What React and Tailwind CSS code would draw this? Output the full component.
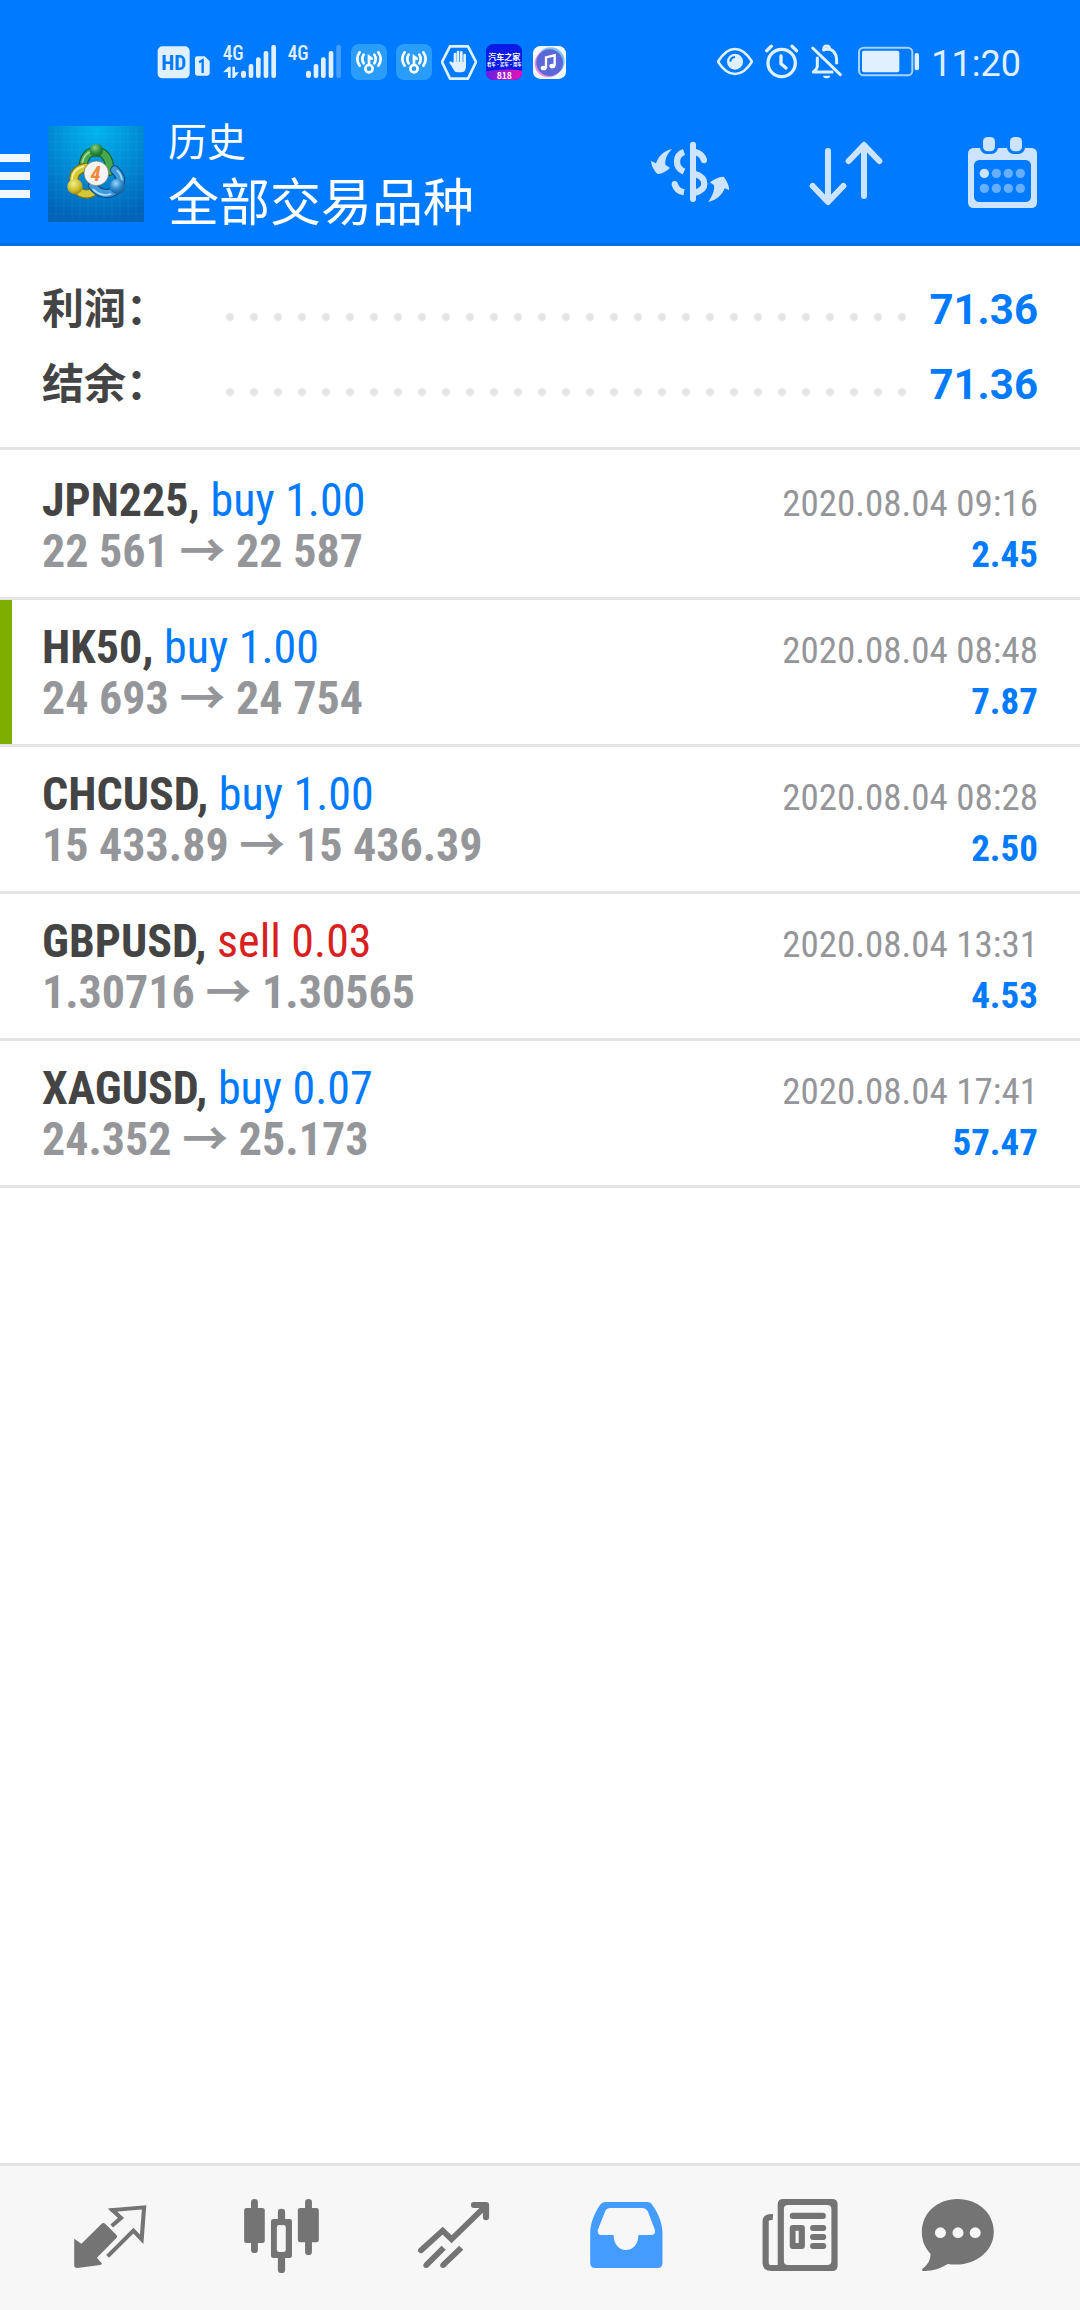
import { useState } from "react";

const totals = [
  { label: "利润：", value: "71.36" },
  { label: "结余：", value: "71.36" },
];

const deals = [
  { symbol: "JPN225", side: "buy", volume: "1.00", open: "22 561", close: "22 587", time: "2020.08.04 09:16", profit: "2.45" },
  { symbol: "HK50", side: "buy", volume: "1.00", open: "24 693", close: "24 754", time: "2020.08.04 08:48", profit: "7.87", takeProfit: true },
  { symbol: "CHCUSD", side: "buy", volume: "1.00", open: "15 433.89", close: "15 436.39", time: "2020.08.04 08:28", profit: "2.50" },
  { symbol: "GBPUSD", side: "sell", volume: "0.03", open: "1.30716", close: "1.30565", time: "2020.08.04 13:31", profit: "4.53" },
  { symbol: "XAGUSD", side: "buy", volume: "0.07", open: "24.352", close: "25.173", time: "2020.08.04 17:41", profit: "57.47" },
];

// ---- status bar icons ----

function HdIcon() {
  return (
    <svg viewBox="51 42 171 108" className="h-9 w-[57px]" fill="currentColor" aria-hidden="true">
      <rect x="53" y="49" width="96" height="96" rx="14" />
      <text x="101" y="120" textAnchor="middle" fontSize="63" fontWeight="700" className="fill-[#007aff] font-['Roboto_Condensed','Liberation_Sans_Narrow',sans-serif]">HD</text>
      <path d="M172 79h22l15 15v36q0 7-7 7h-30q-7 0-7-7V86q0-7 7-7z" />
      <path d="M177 97l11-6v38" fill="none" stroke="#007aff" strokeWidth="7" />
    </svg>
  );
}

function SignalIcon({ weak }) {
  return (
    <svg viewBox={weak ? "444 42 162 108" : "249 42 168 108"} className={weak ? "h-9 w-[54px] overflow-visible" : "h-9 w-[56px] overflow-visible"} fill="currentColor" aria-hidden="true">
      <text x={weak ? 443 : 248} y="89" fontSize="58" fontWeight="500" className="font-['Roboto_Condensed','Liberation_Sans_Narrow',sans-serif]">4G</text>
      {!weak && <path d="M249 127l17-17h6v34h-8v-18zM277 110h8v17h12l-14 17h-6z" />}
      <g transform={weak ? "translate(195 0)" : undefined}>
        <rect x="303" y="122" width="15" height="22" rx="7" />
        <rect x="326" y="102" width="14" height="42" rx="6" />
        <rect x="348" y="82" width="14" height="62" rx="6" />
        <rect x="371" y="63" width="14" height="81" rx="6" />
        <rect x="394" y="45" width="14" height="99" rx="6" opacity={weak ? 0.3 : 1} />
      </g>
    </svg>
  );
}

function WifiKeyIcon() {
  return (
    <svg viewBox="78 42 108 108" className="h-9 w-9" aria-hidden="true">
      <rect x="78" y="42" width="108" height="108" rx="24" fill="#2a9dfb" />
      <g fill="none" stroke="#fff" strokeWidth="8" strokeLinecap="round">
        <circle cx="132" cy="116" r="11" />
        <path d="M132 104V80l8 6" />
        <path d="M116 74q-8 13 0 26M104 67q-14 20 0 40M148 74q8 13 0 26M160 67q14 20 0 40" />
      </g>
    </svg>
  );
}

function HandIcon() {
  return (
    <svg viewBox="213 42 108 108" className="h-9 w-9" aria-hidden="true">
      <path d="M240 49h54l24 47-24 50h-54l-24-50z" fill="none" stroke="currentColor" strokeWidth="8" strokeLinejoin="round" />
      <g fill="none" stroke="currentColor" strokeLinecap="round" strokeWidth="8">
        <path d="M255 72v32M264 66v38M274 67v37M284 75v30M242 98l10 12" />
      </g>
      <path d="M251 96h37v14q-1 17-14 17h-12q-8 0-12-9l-8-16z" fill="currentColor" />
    </svg>
  );
}

function AutohomeIcon() {
  return (
    <svg viewBox="348 42 108 108" className="h-9 w-9" aria-hidden="true">
      <defs>
        <linearGradient id="sale">
          <stop offset="0" stopColor="#6a1fe0" />
          <stop offset="1" stopColor="#e512b4" />
        </linearGradient>
        <clipPath id="autoClip">
          <rect x="348" y="42" width="108" height="108" rx="22" />
        </clipPath>
      </defs>
      <g clipPath="url(#autoClip)">
        <rect x="348" y="42" width="108" height="108" fill="#0a1be8" />
        <path d="M348 124q54-10 108-2v28H348z" fill="url(#sale)" />
        <g fill="#fff" textAnchor="middle" fontWeight="700" className="font-['Noto_Sans_CJK_SC',sans-serif]">
          <text x="403" y="91" fontSize="24">汽车之家</text>
          <text x="403" y="109" fontSize="13">看车·买车·用车</text>
          <text x="403" y="146" fontSize="26">818</text>
        </g>
      </g>
    </svg>
  );
}

function MusicIcon() {
  return (
    <svg viewBox="483 42 108 108" className="h-9 w-9" aria-hidden="true">
      <rect x="489" y="48" width="99" height="99" rx="22" fill="#f5f7ff" />
      <circle cx="542" cy="94" r="42" fill="#7cc3f5" />
      <circle cx="535" cy="101" r="41" fill="#e98be0" />
      <circle cx="539" cy="98" r="40" fill="#5a68d8" />
      <path d="M528 113V82l26-6v31" fill="none" stroke="#fff" strokeWidth="7" />
      <ellipse cx="521" cy="114" rx="9" ry="7" fill="#fff" />
      <ellipse cx="547" cy="108" rx="9" ry="7" fill="#fff" />
    </svg>
  );
}

function EyeIcon() {
  return (
    <svg viewBox="54 42 108 108" className="h-9 w-9" aria-hidden="true">
      <path d="M57 95Q80 57 108 57T159 95Q136 132 108 132T57 95z" fill="none" stroke="currentColor" strokeWidth="8" />
      <circle cx="108" cy="95" r="24" fill="currentColor" />
      <path d="M94 95q1-13 14-14" fill="none" stroke="#007aff" strokeWidth="6" />
    </svg>
  );
}

function AlarmIcon() {
  return (
    <svg viewBox="198 42 99 108" className="h-9 w-[33px]" fill="none" stroke="currentColor" strokeLinecap="round" aria-hidden="true">
      <circle cx="248" cy="99" r="41" strokeWidth="10" />
      <path d="M246 78v23l15 13" strokeWidth="10" strokeLinejoin="round" />
      <path d="M203 62l14-13M293 62l-14-13" strokeWidth="10" />
    </svg>
  );
}

function BellOffIcon() {
  return (
    <svg viewBox="333 42 108 108" className="h-9 w-9" fill="none" stroke="currentColor" strokeWidth="9" aria-hidden="true">
      <path d="M341 54l83 80" strokeWidth="9" strokeLinecap="round" />
      <path d="M355 80v28q0 8-12 18h60" strokeLinejoin="round" />
      <path d="M370 61q30-12 41 16 2 6 2 26M375 58q-2-10 8-10t8 10" />
      <path d="M372 137h22q-2 8-11 8t-11-8z" fill="currentColor" stroke="none" />
    </svg>
  );
}

function BatteryIcon() {
  return (
    <svg viewBox="477 42 183 108" className="h-9 w-[61px]" fill="currentColor" aria-hidden="true">
      <rect x="480" y="53" width="160" height="83" rx="14" fill="none" stroke="currentColor" strokeWidth="6" opacity="0.75" />
      <rect x="489" y="62" width="112" height="65" rx="6" />
      <rect x="647" y="69" width="13" height="52" rx="6" />
    </svg>
  );
}

// ---- toolbar icons ----

function AppLogo() {
  return (
    <svg viewBox="144 48 288 288" className="h-24 w-24" role="img" aria-label="MetaTrader 4">
      <defs>
        <radialGradient id="sky" cx="0.5" cy="0.05" r="0.95">
          <stop offset="0" stopColor="#00b4ee" />
          <stop offset="0.55" stopColor="#0086d2" />
          <stop offset="1" stopColor="#0063b8" />
        </radialGradient>
        <radialGradient id="greenHead" cx="0.4" cy="0.3" r="0.8">
          <stop offset="0" stopColor="#8fd08a" />
          <stop offset="0.5" stopColor="#2f8f3c" />
          <stop offset="1" stopColor="#155c22" />
        </radialGradient>
        <radialGradient id="yellowHead" cx="0.4" cy="0.3" r="0.8">
          <stop offset="0" stopColor="#f4ee8a" />
          <stop offset="0.6" stopColor="#c9b824" />
          <stop offset="1" stopColor="#857a10" />
        </radialGradient>
        <radialGradient id="blueHead" cx="0.4" cy="0.3" r="0.8">
          <stop offset="0" stopColor="#9bd6fa" />
          <stop offset="0.5" stopColor="#2a86c8" />
          <stop offset="1" stopColor="#0d4f8e" />
        </radialGradient>
      </defs>
      <rect x="144" y="48" width="288" height="288" fill="url(#sky)" />
      <path
        d="M168 48v288M192 48v288M216 48v288M240 48v288M264 48v288M288 48v288M312 48v288M336 48v288M360 48v288M384 48v288M408 48v288M144 72h288M144 96h288M144 120h288M144 144h288M144 168h288M144 192h288M144 216h288M144 240h288M144 264h288M144 288h288M144 312h288"
        stroke="#fff"
        strokeWidth="1"
        opacity="0.13"
      />
      <g fill="none" strokeLinecap="round">
        <path d="M250 176C248 138 268 124 289 124S332 145 328 184" stroke="#195f27" strokeWidth="28" />
        <path d="M250 176C248 138 268 124 289 124S332 145 328 184" stroke="#48a850" strokeWidth="21" />
        <path d="M247 158C252 132 272 120 289 120" stroke="#a5dba0" strokeWidth="5" />
        <path d="M256 172C228 178 220 196 221 216C226 248 254 258 276 248" stroke="#7d7515" strokeWidth="28" />
        <path d="M256 172C228 178 220 196 221 216C226 248 254 258 276 248" stroke="#d4c835" strokeWidth="21" />
        <path d="M250 169C226 176 216 192 216 210" stroke="#f6f19a" strokeWidth="5" />
        <path d="M344 180C364 198 366 216 354 234C330 262 294 250 278 228" stroke="#0e4f8c" strokeWidth="28" />
        <path d="M344 180C364 198 366 216 354 234C330 262 294 250 278 228" stroke="#3f9bdc" strokeWidth="21" />
        <path d="M352 182C366 196 368 208 364 222M280 238C296 256 318 258 332 252" stroke="#a9dcfb" strokeWidth="5" />
      </g>
      <circle cx="289" cy="121" r="20" fill="url(#greenHead)" />
      <circle cx="225" cy="230" r="23" fill="url(#yellowHead)" />
      <circle cx="352" cy="229" r="23" fill="url(#blueHead)" />
      <circle cx="289" cy="190" r="37" fill="#f4f4f6" stroke="#7a6a50" strokeWidth="2" />
      <text x="287" y="212" textAnchor="middle" fontSize="62" fontStyle="italic" fontWeight="700" fill="#f0893a" className="font-['Roboto_Condensed','Liberation_Sans_Narrow',sans-serif]">4</text>
    </svg>
  );
}

function MenuIcon() {
  return (
    <svg viewBox="0 0 30 48" className="h-12 w-[30px]" fill="#eff8ff" aria-hidden="true">
      <path d="M0 4h30v8H0zM0 22h30v8H0zM0 40h30v8H0z" />
    </svg>
  );
}

function CurrencyIcon() {
  return (
    <svg viewBox="63 45 234 234" className="h-[78px] w-[78px]" fill="currentColor" aria-hidden="true">
      <rect x="180" y="65" width="18" height="181" rx="9" />
      <g fill="none" stroke="currentColor" strokeWidth="19">
        <path d="M162 96C134 106 134 142 162 155" />
        <path d="M134 192Q139 213 162 217" />
        <path d="M196 96Q217 102 222 121" />
        <path d="M196 162C232 174 232 208 196 218" />
      </g>
      <circle cx="134" cy="192" r="9" />
      <circle cx="222" cy="121" r="9" />
      <path d="M126 87C112 100 104 118 106 134L120 144C106 156 94 162 82 162C72 152 64 138 63 123L78 130C86 108 102 92 126 87Z" />
      <path d="M235 246C248 226 254 212 252 196L240 187C254 176 268 170 281 170C290 182 297 196 298 210L284 205C276 226 260 240 235 246Z" />
    </svg>
  );
}

function SortIcon() {
  return (
    <svg viewBox="531 45 234 234" className="h-[78px] w-[78px]" fill="none" stroke="currentColor" strokeWidth="18" strokeLinecap="round" strokeLinejoin="round" aria-hidden="true">
      <path d="M594 93v152M548 198l46 48 46-48" />
      <path d="M702 228V76M656 123l46-48 46 48" />
    </svg>
  );
}

function CalendarIcon() {
  return (
    <svg viewBox="999 45 234 234" className="h-[78px] w-[78px]" fill="currentColor" aria-hidden="true">
      <rect x="1014" y="84" width="207" height="180" rx="16" />
      <rect x="1050" y="42" width="54" height="60" rx="20" fill="#007aff" />
      <rect x="1131" y="42" width="54" height="60" rx="20" fill="#007aff" />
      <rect x="1059" y="51" width="36" height="43" rx="14" />
      <rect x="1140" y="51" width="36" height="43" rx="14" />
      <rect x="1032" y="120" width="171" height="126" rx="16" fill="#007aff" />
      <circle cx="1063" cy="160" r="14" />
      <g fill="#66afff">
        <circle cx="1099" cy="160" r="14" />
        <circle cx="1135" cy="160" r="14" />
        <circle cx="1171" cy="160" r="14" />
        <circle cx="1063" cy="205" r="14" />
        <circle cx="1099" cy="205" r="14" />
        <circle cx="1135" cy="205" r="14" />
        <circle cx="1171" cy="205" r="14" />
      </g>
    </svg>
  );
}

// ---- bottom navigation icons ----

function QuotesIcon() {
  return (
    <svg viewBox="197 138 244 252" preserveAspectRatio="none" className="h-[84px] w-[84px]" fill="currentColor" aria-hidden="true">
      <path d="M215 266L236 281L294 222Q299 217 305 221L338 255Q342 260 337 265L281 323L296 341Q294 344 290 345L224 354Q215 354 215 346Z" />
      <path d="M324 228L351 204L326 180L418 172L411 268L387 242L312 319" fill="none" stroke="currentColor" strokeWidth="12" />
      <circle cx="325" cy="180" r="6" />
    </svg>
  );
}

function ChartsIcon() {
  return (
    <svg viewBox="697 138 244 252" preserveAspectRatio="none" className="h-[84px] w-[84px]" fill="currentColor" aria-hidden="true">
      <rect x="729" y="147" width="20" height="162" rx="10" />
      <rect x="709" y="174" width="60" height="105" rx="7" />
      <rect x="886" y="147" width="20" height="168" rx="10" />
      <rect x="865" y="174" width="61" height="103" rx="7" />
      <rect x="807" y="176" width="21" height="50" rx="10" />
      <rect x="807" y="310" width="21" height="59" rx="10" />
      <path fillRule="evenodd" d="M794 207h47q7 0 7 7v103q0 7-7 7h-47q-7 0-7-7V214q0-7 7-7zM811 225q-7 0-7 7v67q0 7 7 7h12q7 0 7-7v-67q0-7-7-7z" />
    </svg>
  );
}

function TradeIcon() {
  return (
    <svg viewBox="1196 138 244 252" preserveAspectRatio="none" className="h-[84px] w-[84px]" fill="none" stroke="currentColor" strokeWidth="17" aria-hidden="true">
      <path d="M1222 301L1285 242L1311 268L1404 174" strokeLinecap="round" />
      <path d="M1376 165h35v37" strokeWidth="18" strokeLinecap="round" strokeLinejoin="round" />
      <path d="M1237 346L1288 293M1286 346L1339 293" />
      <circle cx="1237" cy="346" r="8" fill="currentColor" stroke="none" />
      <circle cx="1286" cy="346" r="8" fill="currentColor" stroke="none" />
    </svg>
  );
}

function HistoryIcon() {
  return (
    <svg viewBox="128 138 244 252" preserveAspectRatio="none" className="h-[84px] w-[84px]" fill="currentColor" aria-hidden="true">
      <path
        fillRule="evenodd"
        d="M191 156H312Q321 156 327 166C345 192 356 222 356 250V339Q356 354 341 354H161Q146 354 146 339V250C146 222 157 192 174 166Q181 156 191 156ZM205 174Q194 174 190 183L168 240Q166 255 179 255H214C214 282 230 300 250 300S286 282 286 255H323Q337 255 334 240L314 186Q309 174 296 174Z"
      />
    </svg>
  );
}

function NewsIcon() {
  return (
    <svg viewBox="627 138 244 252" preserveAspectRatio="none" className="h-[84px] w-[84px]" fill="currentColor" aria-hidden="true">
      <path fillRule="evenodd" d="M706 147H848Q864 147 864 163V347Q864 363 848 363H690V163Q690 147 706 147ZM720 165Q708 165 708 177V333Q708 345 720 345H834Q846 345 846 333V177Q846 165 834 165Z" />
      <path d="M676 201Q655 200 655 214V338Q655 354 672 354H700" fill="none" stroke="currentColor" strokeWidth="18" />
      <rect x="725" y="188" width="105" height="19" rx="9" />
      <path fillRule="evenodd" d="M734 225h26q9 0 9 9v54q0 9-9 9h-26q-9 0-9-9v-54q0-9 9-9zM742 242v37h9v-37z" />
      <rect x="784" y="225" width="47" height="18" rx="9" />
      <rect x="784" y="252" width="47" height="18" rx="9" />
      <rect x="784" y="279" width="47" height="18" rx="9" />
    </svg>
  );
}

function ChatIcon() {
  return (
    <svg viewBox="1092 138 244 252" preserveAspectRatio="none" className="h-[84px] w-[84px]" fill="currentColor" aria-hidden="true">
      <path
        fillRule="evenodd"
        d="M1213 147C1273 147 1318 190 1318 246C1318 304 1262 354 1184 342C1162 357 1138 364 1113 363Q1107 361 1111 356C1128 342 1134 330 1134 311C1118 294 1109 272 1109 246C1109 190 1153 147 1213 147ZM1147 248a16 16 0 1 0 32 0a16 16 0 1 0-32 0ZM1198 248a16 16 0 1 0 32 0a16 16 0 1 0-32 0ZM1248 248a16 16 0 1 0 32 0a16 16 0 1 0-32 0Z"
      />
    </svg>
  );
}

const tabs = [
  { id: "quotes", label: "行情", Icon: QuotesIcon },
  { id: "charts", label: "图表", Icon: ChartsIcon },
  { id: "trade", label: "交易", Icon: TradeIcon },
  { id: "history", label: "历史", Icon: HistoryIcon },
  { id: "news", label: "新闻", Icon: NewsIcon },
  { id: "chat", label: "聊天", Icon: ChatIcon },
];

function StatusBar() {
  return (
    <div className="flex h-[105px] items-start justify-between pt-11 pr-[59px] pl-[157px] text-[#e0f0ff]">
      <div className="flex gap-[9px]">
        <HdIcon />
        <SignalIcon />
        <SignalIcon weak />
        <WifiKeyIcon />
        <WifiKeyIcon />
        <HandIcon />
        <AutohomeIcon />
        <MusicIcon />
      </div>
      <div className="flex gap-3">
        <EyeIcon />
        <AlarmIcon />
        <BellOffIcon />
        <BatteryIcon />
        <span className="font-['Roboto',sans-serif] text-4xl leading-10">11:20</span>
      </div>
    </div>
  );
}

function DealRow({ deal }) {
  return (
    <li className="flex border-b-3 border-[#e4e4e4]">
      <div className={deal.takeProfit ? "w-3 bg-[#7eae00]" : "w-3"} />
      <div className="flex-1 pt-[22px] pr-[42px] pb-5 pl-[30px] font-['Roboto_Condensed','Liberation_Sans_Narrow','Noto_Sans_CJK_SC',sans-serif]">
        <div className="flex items-baseline justify-between">
          <p className="text-[46px] leading-[51px] text-[#444]">
            <span className="font-bold">{deal.symbol}, </span>
            <span className={deal.side === "buy" ? "text-[#007aff]" : "text-[#d92020]"}>
              {deal.side} {deal.volume}
            </span>
          </p>
          <time className="text-[37px] leading-10 text-[#959699]">{deal.time}</time>
        </div>
        <div className="flex items-baseline justify-between font-bold">
          <p className="text-[46px] leading-[51px] text-[#959699]">
            {deal.open} → {deal.close}
          </p>
          <span className="text-[37px] leading-10 text-[#007aff]">{deal.profit}</span>
        </div>
      </div>
    </li>
  );
}

export default function App() {
  const [activeTab, setActiveTab] = useState("history");

  return (
    <div className="flex min-h-screen flex-col bg-white font-['Roboto','Noto_Sans_CJK_SC',sans-serif]">
      <header className="border-b-3 border-[#006ee6] bg-[#007aff] text-white">
        <StatusBar />
        <div className="flex h-[138px] items-center pr-[39px]">
          <button type="button" aria-label="菜单" className="mr-[18px]">
            <MenuIcon />
          </button>
          <AppLogo />
          <div className="mb-1 ml-6 flex-1 font-['Noto_Sans_CJK_SC',sans-serif]">
            <p className="text-[39px] leading-[54px]">历史</p>
            <h1 className="text-[51px] leading-[66px]">全部交易品种</h1>
          </div>
          <div className="flex gap-[78px] text-[#cce4ff]">
            <button type="button" aria-label="交易品种">
              <CurrencyIcon />
            </button>
            <button type="button" aria-label="排序">
              <SortIcon />
            </button>
            <button type="button" aria-label="日期">
              <CalendarIcon />
            </button>
          </div>
        </div>
      </header>

      <main className="flex-1">
        <dl className="border-b-3 border-[#e4e4e4] px-[42px] pt-[26px] pb-[25px] text-[42px] font-bold">
          {totals.map(({ label, value }) => (
            <div key={label} className="flex items-baseline">
              <dt className="w-44 font-['Noto_Sans_CJK_SC',sans-serif] leading-none text-[#444]">{label}</dt>
              {/* dotted leader */}
              <dd className="mr-4 h-[14px] flex-1 bg-[radial-gradient(circle,#e4e4e4_3px,transparent_5px)] bg-size-[24px_14px] bg-repeat-x" aria-hidden="true" />
              <dd className="leading-[75px] text-[#007aff]">{value}</dd>
            </div>
          ))}
        </dl>

        <ul className="pt-[3px]">
          {deals.map((deal) => (
            <DealRow key={deal.symbol} deal={deal} />
          ))}
        </ul>
      </main>

      <nav className="grid grid-cols-[172fr_172fr_172fr_172fr_172fr_148fr] border-t-3 border-[#e4e4e4] bg-[#f7f7f7] py-[30px] pr-12 pl-6">
        {tabs.map(({ id, label, Icon }) => (
          <button
            key={id}
            type="button"
            aria-label={label}
            onClick={() => setActiveTab(id)}
            className={activeTab === id ? "flex justify-center text-[#449cff]" : "flex justify-center text-[#747474]"}
          >
            <Icon />
          </button>
        ))}
      </nav>
    </div>
  );
}
